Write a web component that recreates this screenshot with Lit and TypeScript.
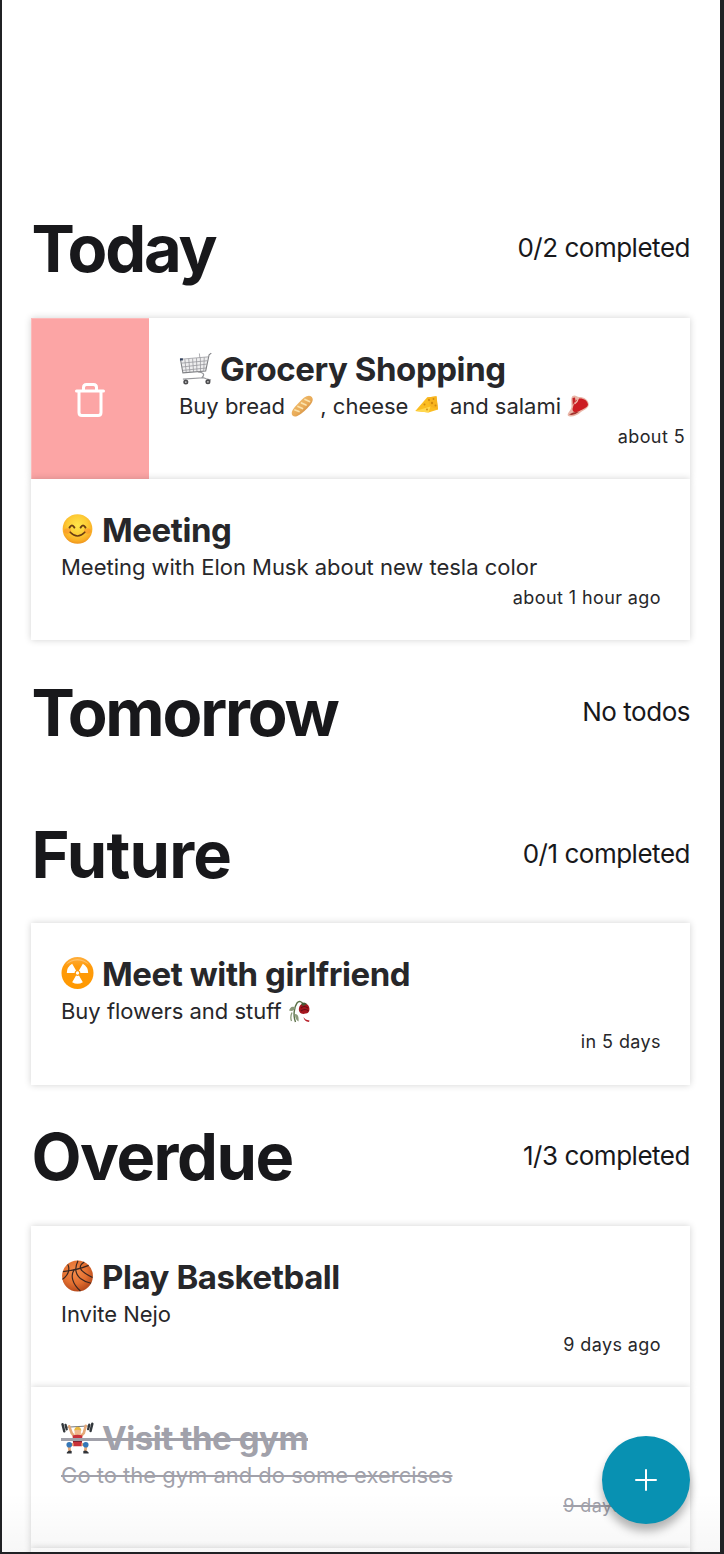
import { LitElement, html, css, svg, nothing } from "lit";
import { customElement, property } from "lit/decorators.js";
import { styleMap } from "lit/directives/style-map.js";

const glyphs: Record<string, unknown> = {
  cart: svg`
    <path d="M2 8 L30 5 L27.500 19.500 L4 21.500 Z" fill="#ededee"/>
    <g fill="none" stroke="#97989c" stroke-width=".8">
      <path d="M1.500 7.500 L30 5 M2.500 11.500 L29.200 9 M3 15.500 L28.500 12.500 M3.500 19 L28 16.500"/>
      <path d="M6 7.500 L7.500 21 M10 7 L11.200 20.500 M14 6.700 L15 20.500 M18 6.300 L18.500 20 M22 6 L22.200 20 M26 5.500 L25.500 19.500"/>
      <path d="M21 1.500 L21.500 6"/>
    </g>
    <path d="M33.300 1.200 L31 3 L27.500 19.500 L4 21.500 L1.500 7.500" fill="none" stroke="#7f8084" stroke-width="1.100"/>
    <path d="M19.500 20.500 C25 21 27 23 24 26 L28 27.500 L33 29 M4 28 L25 26.500" fill="none" stroke="#97989c" stroke-width="1.200"/>
    <rect x="1" y="6.500" width="3" height="2.200" fill="#34435e"/>
    <circle cx="7" cy="31" r="2.600" fill="#4c4c4f"/><circle cx="7" cy="31" r=".9" fill="#ccc"/>
    <circle cx="29.800" cy="30.700" r="2.600" fill="#4c4c4f"/><circle cx="29.800" cy="30.700" r=".9" fill="#ccc"/>`,
  smile: svg`
    <defs><radialGradient id="sm" cx=".5" cy=".38" r=".62">
      <stop offset="0" stop-color="#ffe64a"/><stop offset=".55" stop-color="#fdcb35"/><stop offset=".85" stop-color="#f9ac25"/><stop offset="1" stop-color="#ee931c"/>
    </radialGradient></defs>
    <circle cx="17" cy="16.500" r="15.300" fill="url(#sm)"/>
    <ellipse cx="6.800" cy="18.500" rx="3.600" ry="2.800" fill="#f98d2b" opacity=".55"/>
    <ellipse cx="27.200" cy="18.500" rx="3.600" ry="2.800" fill="#f98d2b" opacity=".55"/>
    <path d="M8.800 15 Q11.300 10.500 13.800 15 M20.200 15 Q22.700 10.500 25.200 15" fill="none" stroke="#6b3d12" stroke-width="2" stroke-linecap="round"/>
    <path d="M9.500 19.800 Q17 27.500 24.500 19.800" fill="none" stroke="#6b3d12" stroke-width="1.700" stroke-linecap="round"/>`,
  radio: svg`
    <defs><linearGradient id="ra" x1="0" y1="0" x2="0" y2="1">
      <stop offset="0" stop-color="#ffae3c"/><stop offset=".3" stop-color="#ff9b0c"/><stop offset="1" stop-color="#ff9900"/>
    </linearGradient></defs>
    <circle cx="17" cy="16.500" r="16.500" fill="url(#ra)"/>
    <path d="M5 8 A15 15 0 0 1 29 8 Q17 -1 5 8" fill="#ffd18c" opacity=".6"/>
    <g fill="#fff">
      <path d="M14 16.500 H6 A11 11 0 0 1 11.500 7 L15.500 13.900 A3 3 0 0 0 14 16.500Z"/>
      <path d="M20 16.500 H28 A11 11 0 0 0 22.500 7 L18.500 13.900 A3 3 0 0 1 20 16.500Z"/>
      <path d="M15.500 19.100 L11.500 26 A11 11 0 0 0 22.500 26 L18.500 19.100 A3 3 0 0 1 15.500 19.100Z"/>
      <circle cx="17" cy="16.500" r="1.700"/>
    </g>`,
  ball: svg`
    <defs><radialGradient id="ba" cx=".42" cy=".36" r=".65">
      <stop offset="0" stop-color="#f58d4b"/><stop offset=".6" stop-color="#e26f30"/><stop offset="1" stop-color="#b74a1c"/>
    </radialGradient></defs>
    <circle cx="17" cy="16.500" r="15.900" fill="url(#ba)"/>
    <g fill="none" stroke="#3b2620" stroke-width="1.200">
      <path d="M2 12 C10 11 20 9 28.500 5.500"/>
      <path d="M17.500 .7 C14 8 14 14 20 19 C24 22 28 23.500 31 24"/>
      <path d="M24 2 C16 7 20 12 32.500 18"/>
      <path d="M7 4.500 C9 9 8 15 1.500 20"/>
      <path d="M14 9.500 C9 16 12 25 20 32"/>
    </g>`,
  lifter: svg`
    <path d="M4 6.500 L30 5" stroke="#6d7276" stroke-width="1"/>
    <g fill="#33383c">
      <rect x="1.200" y="2" width="2.500" height="10" rx="1" transform="rotate(-14 2.500 7)"/><rect x="4" y="2.800" width="2.400" height="7" rx="1" transform="rotate(-14 5 6)"/>
      <rect x="30" y="1.500" width="2.500" height="10" rx="1" transform="rotate(14 31 7)"/><rect x="27.400" y="2.500" width="2.400" height="7" rx="1" transform="rotate(14 28 6)"/>
    </g>
    <path d="M8.500 5.500 L11 12.500 L14 16 M25.500 5 L23.500 12.500 L20 16" fill="none" stroke="#e5a878" stroke-width="2.700" stroke-linecap="round"/>
    <rect x="14" y="7.500" width="6.500" height="8" rx="3" fill="#efb98e"/>
    <path d="M13.500 10 Q14 6 17.200 6 Q20.500 6 21 10 Q17 8 13.500 10" fill="#e7b842"/>
    <path d="M12 15 Q17 13.500 22 15 L21.500 26 H12.500Z" fill="#c9313a"/>
    <path d="M12.500 21 H21.500" stroke="#7d2430" stroke-width="1.300"/>
    <path d="M13 24 L8 24.500 L9 31 M21 24 L26 24.500 L25 31" fill="none" stroke="#e5a878" stroke-width="2.900"/>
    <circle cx="8.500" cy="24.500" r="2.900" fill="#3577b8"/><circle cx="25.500" cy="24.500" r="2.900" fill="#3577b8"/>
    <path d="M6 32.500 Q8 29.500 11 31 V33.500 H6Z M23 31 Q26 29.500 28.500 32.500 V33.500 H23Z" fill="#303338"/>`,
  bread: svg`
    <defs><linearGradient id="br" x1="0" y1="0" x2="1" y2="1">
      <stop offset="0" stop-color="#f3c578"/><stop offset=".55" stop-color="#e9ab58"/><stop offset="1" stop-color="#ad6527"/>
    </linearGradient></defs>
    <path d="M1.500 20.500 C-1 17 3 12.500 8 7.500 C13 2 17.500 -1 20.800 2 C23.500 5 20 9.500 15 14.500 C9.500 19.500 4.500 23.500 1.500 20.500Z" fill="url(#br)"/>
    <path d="M4 15 L8 16.500 M7 11.500 L11.500 13.500 M10.500 8 L15 10 M14 4.500 L18.500 6.500" stroke="#fbe3ad" stroke-width="1.700" stroke-linecap="round"/>`,
  cheese: svg`
    <path d="M.3 16 L12 2.500 L21.500 1.200 L23 14.500 L13.500 17.500Z" fill="#fbbd22"/>
    <path d="M12 2.500 L21.500 1.200 L23 14.500 L15.500 11.500Z" fill="#f8b41e"/>
    <path d="M.3 16 L15.500 11.500 L13.500 17.500Z" fill="#ffd84e"/>
    <g fill="#d08a10"><circle cx="14" cy="5" r="1.100"/><circle cx="18.500" cy="4" r=".9"/><circle cx="17" cy="8" r="1.200"/><circle cx="20.500" cy="10.500" r="1"/><circle cx="9.500" cy="9.500" r="1"/><circle cx="12" cy="14.500" r=".9"/></g>`,
  meat: svg`
    <path d="M5.500 1 C8 -.5 10 1.500 12 2 C17 2 21.500 4.500 21.800 9.500 C21.500 13.500 17 15 14 17 C10 21 3 23 .8 20.500 C0 17.500 4.500 15.500 4.500 11 C4.500 7 3.500 3.500 5.500 1Z" fill="#e9b6a8"/>
    <path d="M10.500 4 C15 2.500 20.500 5 21 9.500 C20.500 13 15.500 14 12.500 16 C9 18 5.500 17.500 5.500 14 C6.500 10 7.500 6.500 10.500 4Z" fill="#cc1c22"/>
    <path d="M5.500 3 L8 2.500 L8.500 6 L5.800 10Z" fill="#c42226"/>
    <path d="M2 19.500 Q6 16.500 12 16.800 Q7 21 2 19.500" fill="#a3312c"/>
    <path d="M7.500 9 Q10.500 7 11.500 3" stroke="#f0c0b2" stroke-width="1.200" fill="none"/>`,
  rose: svg`
    <path d="M7.500 22 C5 16 6 7 9 3 C11 .5 14 1.500 15 4" fill="none" stroke="#5b7148" stroke-width="1.400"/>
    <path d="M7.500 8 C4 5 2 8 1 10.500 C4 11.500 6 10.500 7.500 8Z M7 14 C10 14 11 17 10.500 21.500 C8 20 7 18 7 14Z" fill="#8b9a7b"/>
    <path d="M4 12.500 Q2 17 3.500 21" stroke="#8b9a7b" stroke-width="1.300" fill="none"/>
    <path d="M11 8 C11.500 4 16 2 20 5 C23 9 21 14 17.500 13.500 C13.500 15 10 12 11 8Z" fill="#a5161e"/>
    <path d="M13 8 Q16 5 20 8 M13 11 Q17 8 20.500 11" stroke="#680d16" stroke-width="1.200" fill="none"/>
    <path d="M13 4 Q16 1 19 4 L15 6Z" fill="#465a35"/>
    <path d="M15.500 17 Q17 20 21.500 20.500 L21 22 Q16 21.500 15.500 17Z" fill="#b8222b"/>`,
};

type Part = string | { glyph: string };
interface Todo {
  glyph: string;
  title: string;
  note: Part[];
  when: string;
  swiped?: boolean;
  done?: boolean;
}
interface Group {
  name: string;
  tracking: number;
  status: string;
  todos: Todo[];
}

const groups: Group[] = [
  {
    name: "Today",
    tracking: -2.2,
    status: "0/2 completed",
    todos: [
      {
        glyph: "cart",
        title: "Grocery Shopping",
        note: ["Buy bread ", { glyph: "bread" }, " , cheese ", { glyph: "cheese" }, "  and salami ", { glyph: "meat" }],
        when: "about 5",
        swiped: true,
      },
      { glyph: "smile", title: "Meeting", note: ["Meeting with Elon Musk about new tesla color"], when: "about 1 hour ago" },
    ],
  },
  { name: "Tomorrow", tracking: -2.15, status: "No todos", todos: [] },
  {
    name: "Future",
    tracking: -0.75,
    status: "0/1 completed",
    todos: [{ glyph: "radio", title: "Meet with girlfriend", note: ["Buy flowers and stuff ", { glyph: "rose" }], when: "in 5 days" }],
  },
  {
    name: "Overdue",
    tracking: -1.5,
    status: "1/3 completed",
    todos: [
      { glyph: "ball", title: "Play Basketball", note: ["Invite Nejo"], when: "9 days ago" },
      { glyph: "lifter", title: "Visit the gym", note: ["Go to the gym and do some exercises"], when: "9 days ago", done: true },
    ],
  },
];

@customElement("todo-row")
class TodoRow extends LitElement {
  @property({ attribute: false }) todo!: Todo;

  static styles = css`
    :host { display: block; position: relative; box-shadow: 0 0 7px rgba(0, 0, 0, 0.18); }
    .row { display: flex; height: 161.2px; background: #fff; overflow: hidden; }
    .remove { width: 118px; flex: none; display: flex; align-items: center; justify-content: center; background: #fca5a5; box-shadow: inset 1px 1px 0 #fcb9b9; }
    .bin { margin-top: 2px; }
    .body { flex: 1; box-sizing: border-box; padding: 31px 29px 0 30px; color: #27272a; white-space: pre; }
    .swiped .body { padding-right: 5px; }
    .title { display: flex; width: max-content; position: relative; height: 40px; line-height: 40px; margin-bottom: 2px; font-size: 33px; font-weight: 700; letter-spacing: -0.44px; }
    .big { width: 33px; height: 33px; margin: 3px 8px 0 0; }
    .note { height: 30px; line-height: 30px; font-size: 22px; letter-spacing: -0.02px; }
    .small { width: 23px; height: 23px; vertical-align: -4px; }
    .when { height: 30px; line-height: 32px; font-size: 18px; letter-spacing: 0.4px; text-align: right; }
    .done .body { color: #a1a1aa; }
    .done .note, .done .when { text-decoration: line-through; text-decoration-thickness: 2px; }
    .done .title::after { content: ""; position: absolute; left: 0; right: 0; top: 20px; height: 3px; background: #a1a1aa; }
  `;

  render() {
    const t = this.todo;
    return html`<div class="row ${t.swiped ? "swiped" : ""} ${t.done ? "done" : ""}">
      ${t.swiped
        ? html`<div class="remove"><svg class="bin" width="32" height="36" viewBox="0 0 32 36" fill="none" stroke="#fff" stroke-width="3" stroke-linecap="round" stroke-linejoin="round">
            <path d="M2.500 9 H29.500 M5 9.500 V30.500 Q5 33.500 8 33.500 H24 Q27 33.500 27 30.500 V9.500 M9.500 8.500 V5.500 Q9.500 2.500 12.500 2.500 H19.500 Q22.500 2.500 22.500 5.500 V8.500"/>
          </svg></div>`
        : nothing}
      <div class="body"><div class="title"><svg class="big" viewBox="0 0 34 34">${glyphs[t.glyph]}</svg><span>${t.title}</span></div><div class="note">${t.note.map((p) =>
        typeof p === "string" ? p : html`<svg class="small" viewBox="0 0 23 23">${glyphs[p.glyph]}</svg>`
      )}</div><div class="when">${t.when}</div></div>
    </div>`;
  }
}

@customElement("app-root")
class AppRoot extends LitElement {
  static styles = css`
    :host { display: block; font-family: Inter, "Liberation Sans", sans-serif; }
    .frame { position: relative; box-sizing: border-box; height: 1554px; overflow: hidden; padding: 176.45px 30px 0 29px; background: #fff; border: solid #202124; border-width: 0 4px 2px 2px; }
    .head { display: flex; align-items: center; justify-content: space-between; height: 141.5px; color: #18181b; }
    .name { margin: 0; padding: 4px 0 0 0.5px; font-size: 65px; line-height: 80px; font-weight: 700; }
    .status { padding-top: 2px; font-size: 26px; line-height: 32px; letter-spacing: -0.48px; }
    .peek { position: relative; height: 20px; background: #fff; box-shadow: 0 0 7px rgba(0, 0, 0, 0.18); }
    .fade { position: absolute; left: 0; right: 0; bottom: 0; height: 60px; background: linear-gradient(rgba(0, 0, 0, 0), rgba(0, 0, 0, 0.03)); }
    .add { position: absolute; right: 30px; bottom: 28.5px; width: 88px; height: 88px; border: 0; border-radius: 50%; padding: 0; display: flex; align-items: center; justify-content: center; background: #0891b2; box-shadow: 0 7px 10px rgba(0, 0, 0, 0.3); }
  `;

  render() {
    return html`<main class="frame">
      ${groups.map(
        (g) => html`<section>
          <header class="head"><h1 class="name" style=${styleMap({ letterSpacing: `${g.tracking}px` })}>${g.name}</h1><span class="status">${g.status}</span></header>
          ${g.todos.map((t) => html`<todo-row .todo=${t}></todo-row>`)}
        </section>`
      )}
      <div class="peek"></div>
      <div class="fade"></div>
      <button class="add" aria-label="Add"><svg width="22" height="22" viewBox="0 0 22 22"><path d="M11 1 V21 M1 11 H21" stroke="#fff" stroke-width="2" stroke-linecap="round"/></svg></button>
    </main>`;
  }
}
